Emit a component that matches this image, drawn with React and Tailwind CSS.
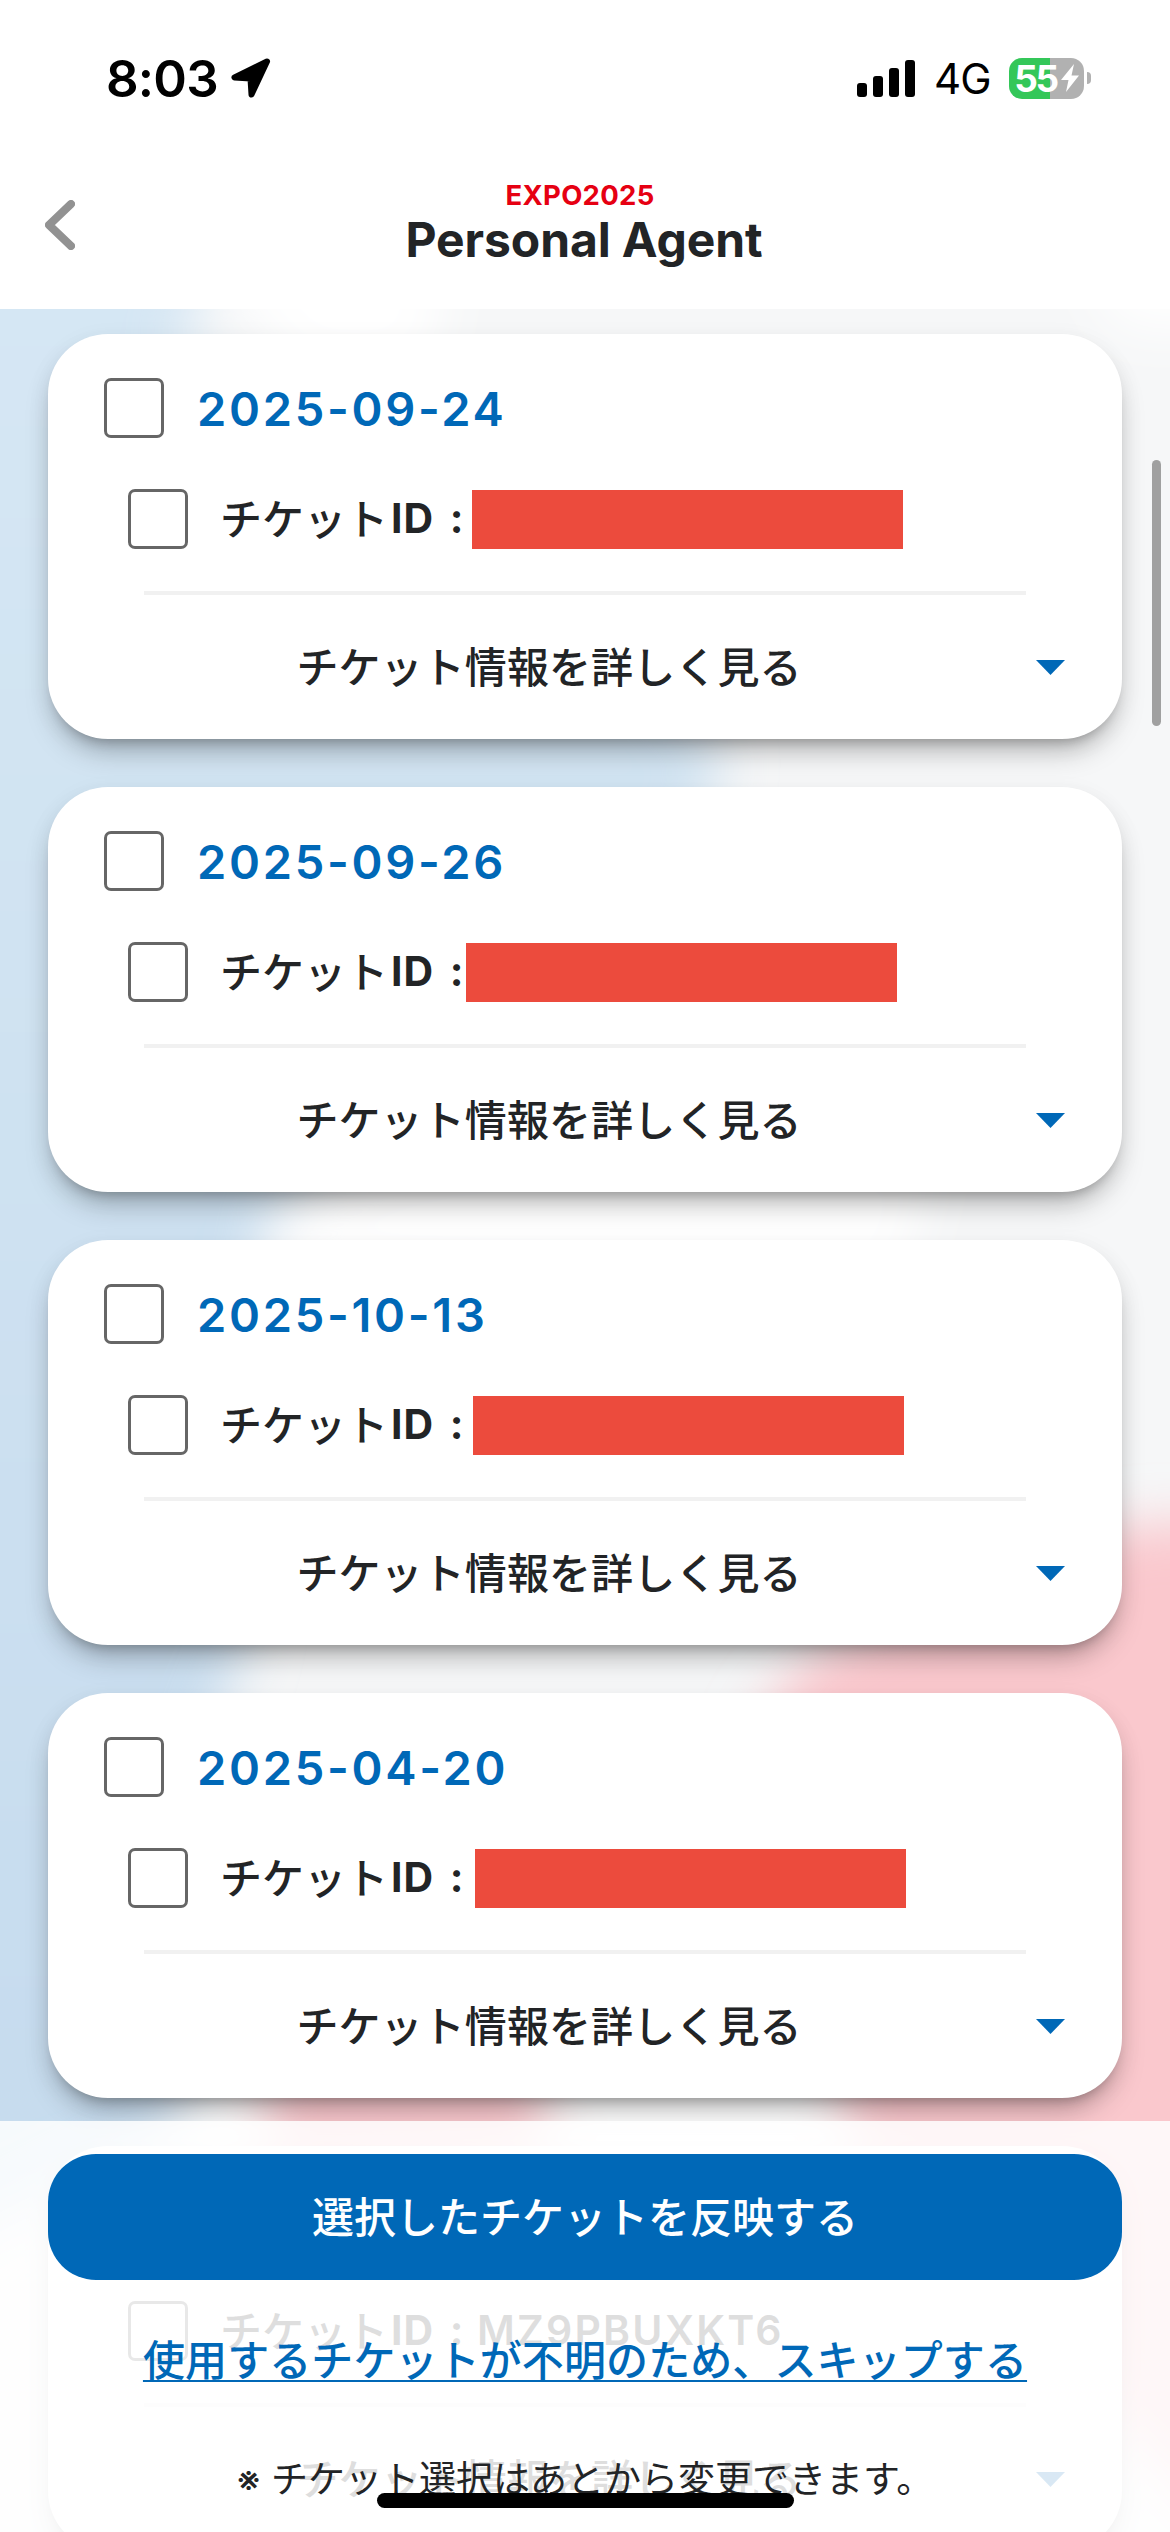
import { useState } from 'react';

const tickets = [
  { date: '2025-09-24', maskClass: 'ml-[6px]' },
  { date: '2025-09-26', maskClass: 'ml-0' },
  { date: '2025-10-13', maskClass: 'ml-[7px]' },
  { date: '2025-04-20', maskClass: 'ml-[9px]' },
  { date: '2025-04-26', id: 'MZ9PBUXKT6' },
];

function Checkbox({ checked, onChange, label }) {
  return (
    <button
      type="button"
      role="checkbox"
      aria-checked={checked}
      aria-label={label}
      onClick={onChange}
      className={`h-[60px] w-[60px] shrink-0 rounded-[7px] border-[3px] border-[#666666] ${checked ? 'bg-[#0068b7]' : 'bg-white'}`}
    />
  );
}

function StatusBar() {
  return (
    <div className="flex h-[156px] shrink-0 items-center pl-[106px] pr-[79px] text-black">
      <span className="w-[110px] text-[51px] leading-none font-semibold tracking-[-0.8px]">8:03</span>
      <svg className="ml-[15px] h-[40px] w-[40px]" viewBox="0 0 40 40">
        <path
          d="M36 3.5 L3.5 19.5 L19.5 20.5 L20.5 36.5 Z"
          stroke="black"
          strokeWidth="6"
          strokeLinejoin="round"
        />
      </svg>
      <div className="ml-auto flex items-end gap-[6px]">
        <div className="h-[14px] w-[10px] rounded-[3px] bg-black" />
        <div className="h-[21px] w-[10px] rounded-[3px] bg-black" />
        <div className="h-[29px] w-[10px] rounded-[3px] bg-black" />
        <div className="h-[37px] w-[10px] rounded-[3px] bg-black" />
      </div>
      <span className="ml-[19px] w-[56px] pt-[2px] text-[42px] leading-[50px] tracking-[-1px]">4G</span>
      <div className="ml-[19px] flex items-center gap-[3px]">
        <div className="flex h-[41px] w-[75px] items-center justify-center rounded-[13px] bg-[linear-gradient(to_right,#34c759_55%,#b1b1b1_55%)] text-white">
          <span className="text-[37px] leading-[41px] font-bold tracking-[-2.5px]">55</span>
          <svg className="ml-[4px] h-[28px] w-[18px]" viewBox="0 0 18 28">
            <path d="M13 0 L0 16 H7.5 L5 28 L18 11.5 H10.5 Z" fill="white" />
          </svg>
        </div>
        <div className="h-[12px] w-[4px] rounded-r-full bg-[#b1b1b1]" />
      </div>
    </div>
  );
}

function Header() {
  return (
    <header className="flex h-[309px] shrink-0 flex-col bg-white">
      <StatusBar />
      <div className="grid grid-cols-[120px_1fr_120px] items-start pt-[25px]">
        <button type="button" aria-label="戻る" className="pt-[19px] pl-[45px]">
          <svg className="h-[50px] w-[30px]" viewBox="0 0 30 50" fill="none">
            <path d="M26 4 L4 25 L26 46" stroke="#929292" strokeWidth="8" strokeLinecap="round" strokeLinejoin="round" />
          </svg>
        </button>
        <div className="flex flex-col items-center">
          <span className="mr-[10px] text-[27.5px] leading-[28px] font-bold tracking-[0.3px] text-[#e60012]">EXPO2025</span>
          <h1 className="mr-[2px] pt-[1px] text-[48px] leading-[60px] font-bold tracking-[-0.1px] text-[#222426]">Personal Agent</h1>
        </div>
      </div>
    </header>
  );
}

function TicketCard({ ticket }) {
  const [dateChecked, setDateChecked] = useState(false);
  const [idChecked, setIdChecked] = useState(false);

  return (
    <article className="h-[405px] shrink-0 rounded-[60px] bg-white pt-[44px] shadow-[0_18px_30px_-8px_rgba(0,0,0,0.28),0_9px_12px_-7px_rgba(0,0,0,0.22),0_6px_24px_rgba(0,0,0,0.06)]">
      <div className="flex h-[60px] items-center gap-[33px] pl-[56px]">
        <Checkbox checked={dateChecked} onChange={() => setDateChecked(!dateChecked)} label={ticket.date} />
        <span className="pt-[2px] text-[47px] font-semibold tracking-[2.7px] text-[#0068b7]">{ticket.date}</span>
      </div>

      <div className="mt-[51px] flex h-[60px] items-center pl-[80px] text-[42px] font-semibold text-[#222426]">
        <Checkbox checked={idChecked} onChange={() => setIdChecked(!idChecked)} label="チケットID" />
        <span className="ml-[32px] w-[168px] font-medium">チケット</span>
        <span className="ml-[3px] w-[75px] text-[41px] font-bold tracking-[1px] [word-spacing:5px] whitespace-pre">ID :</span>
        {ticket.id ? (
          <span className="ml-[11px] text-[41px] tracking-[2.2px]">{ticket.id}</span>
        ) : (
          <span className={`h-[59px] w-[431px] bg-[#ec4b3d] ${ticket.maskClass}`} />
        )}
      </div>

      <div className="mx-[96px] mt-[42px] h-[4px] bg-[#f1f1f1]" />

      <button type="button" className="flex h-[144px] w-full items-center pr-[57px] pl-[48px]">
        <span className="flex-1 text-center text-[42px] font-medium tracking-[0.1px] text-[#222426]">チケット情報を詳しく見る</span>
        <svg className="ml-[34px] h-[15px] w-[29px]" viewBox="0 0 29 15">
          <path d="M0 0 H29 L14.5 15 Z" fill="#0068b7" />
        </svg>
      </button>
    </article>
  );
}

// Soft colour blobs behind the ticket list
function Backdrop() {
  return (
    <svg className="absolute inset-0 h-full w-full" viewBox="0 0 1170 2223" preserveAspectRatio="none">
      <defs>
        <filter id="soft" x="-20%" y="-20%" width="140%" height="140%">
          <feGaussianBlur stdDeviation="26" />
        </filter>
        <linearGradient id="blue" x1="0" y1="0" x2="0" y2="1">
          <stop offset="0" stopColor="#d6e7f4" />
          <stop offset="1" stopColor="#c5dbee" />
        </linearGradient>
      </defs>
      <rect width="1170" height="2223" fill="#f6f7f8" />
      <g filter="url(#soft)">
        <path d="M200 -60 H450 L430 60 H300 Z" fill="#ffffff" />
        <path d="M1080 -60 H1240 V20 H1120 Z" fill="#ffffff" />
        <path d="M250 960 Q320 850 540 840 H940 L900 980 Z" fill="#ffffff" />
        <path d="M-100 -100 H230 L180 40 C300 120 560 250 725 450 C640 700 350 800 270 905 C220 1100 280 1250 235 1365 C160 1500 240 1700 170 1820 L-100 1960 Z" fill="url(#blue)" />
        <path d="M200 1780 H300 V1850 H180 Z" fill="#ffffff" />
        <path d="M450 1760 H850 V1860 H450 Z" fill="#ffffff" />
        <path d="M1300 1215 H1130 C1050 1250 960 1290 880 1315 C760 1350 700 1500 760 1600 C860 1700 820 1790 860 1850 L1300 2300 Z" fill="#fac8cd" />
        <path d="M265 1750 H540 L550 1850 L265 1880 Z" fill="#fac8cd" />
      </g>
    </svg>
  );
}

function Footer() {
  return (
    <footer className="absolute inset-x-0 bottom-0 flex h-[411px] flex-col items-center bg-white/85 px-12 pt-[33px]">
      <button type="button" className="h-[126px] w-full rounded-[48px] bg-[#0068b7] text-[42px] font-medium text-white">
        選択したチケットを反映する
      </button>
      <a href="#skip" className="mt-[51px] text-[42px] leading-[60px] font-medium tracking-[0.1px] text-[#0068b7] underline decoration-[2px] underline-offset-[4px]">
        使用するチケットが不明のため、スキップする
      </a>
      <p className="mt-[62px] text-[37px] leading-[54px] text-[#222426]">※ チケット選択はあとから変更できます。</p>
    </footer>
  );
}

export default function App() {
  return (
    <div className="relative flex h-[2532px] w-[1170px] flex-col overflow-hidden bg-white font-[Inter,'Noto_Sans_CJK_JP',sans-serif]">
      <Header />
      <main className="relative min-h-0 flex-1 overflow-hidden">
        <Backdrop />
        <div className="relative flex flex-col gap-12 px-12 pt-[25px]">
          {tickets.map((ticket) => (
            <TicketCard key={ticket.date} ticket={ticket} />
          ))}
        </div>
        {/* Scroll indicator */}
        <div className="absolute top-[151px] right-[9px] h-[266px] w-[9px] rounded-full bg-[#a0a0a0]" />
      </main>
      <Footer />
      {/* Home indicator */}
      <div className="absolute bottom-[24px] left-[377px] h-[15px] w-[417px] rounded-full bg-black" />
    </div>
  );
}
